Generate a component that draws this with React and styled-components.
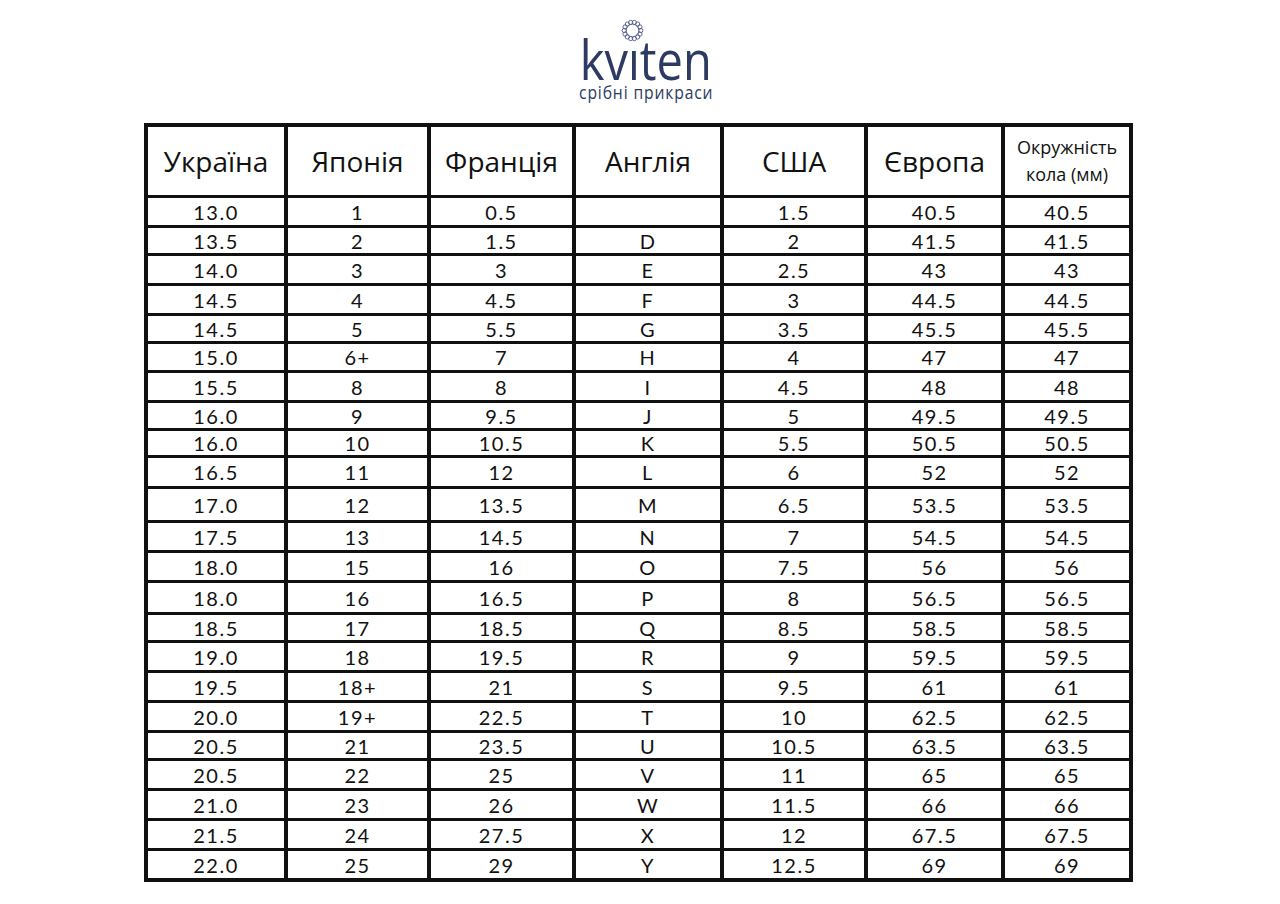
import React from 'react'
import styled, { createGlobalStyle } from 'styled-components'

const GlobalStyle = createGlobalStyle`
  body {
    margin: 0;
    background: #fff;
    font-family: 'Open Sans', 'Liberation Sans', sans-serif;
  }
`

const Page = styled.div`
  display: flex;
  flex-direction: column;
  align-items: center;
  padding-top: 34px;
  width: 1280px;
  height: 904px;
  box-sizing: border-box;
`

const Logo = styled.div`
  position: relative;
  display: flex;
  flex-direction: column;
  align-items: center;
  margin-left: 12px;
  color: #2d3a62;
`

const Ring = styled.svg`
  position: absolute;
  top: -15px;
  left: 50%;
  margin-left: -25px;
  width: 23px;
  height: 23px;
`

const Wordmark = styled.div`
  font-family: 'Open Sans', sans-serif;
  font-size: 54px;
  line-height: 50px;
  transform: scaleX(0.87);
`

const Tagline = styled.div`
  font-family: 'Open Sans', sans-serif;
  font-size: 18px;
  line-height: 16px;
  letter-spacing: 1px;
  transform: scaleX(0.87);
`

const Sheet = styled.div`
  display: grid;
  grid-template-columns: 136px 139px 141px 144px 140px 133px 124px;
  grid-template-rows: 68px ${p => p.$rows};
  column-gap: 4px;
  row-gap: 3px;
  padding: 4px;
  margin: 23px 3px 0 0;
  background: #111;
`

const Cell = styled.div`
  display: flex;
  align-items: center;
  justify-content: center;
  background: #fff;
  color: #111;
  font-family: Lato, 'Open Sans', sans-serif;
  font-size: 20px;
  letter-spacing: 1.5px;
  white-space: nowrap;
`

const HeadCell = styled(Cell)`
  font-family: 'Open Sans', sans-serif;
  font-size: ${p => (p.$small ? '18px' : '28px')};
  line-height: ${p => (p.$small ? '27px' : 'normal')};
  letter-spacing: 0;
  text-align: center;
  white-space: normal;
`

const heads = ['Україна', 'Японія', 'Франція', 'Англія', 'США', 'Європа']

const heights = [27, 25, 27, 27, 25, 26, 27, 25, 24, 28, 31, 27, 27, 29, 25, 27, 27, 27, 25, 27, 27, 27, 27]

const sizes = [
  ['13.0', '1', '0.5', '', '1.5', '40.5', '40.5'],
  ['13.5', '2', '1.5', 'D', '2', '41.5', '41.5'],
  ['14.0', '3', '3', 'E', '2.5', '43', '43'],
  ['14.5', '4', '4.5', 'F', '3', '44.5', '44.5'],
  ['14.5', '5', '5.5', 'G', '3.5', '45.5', '45.5'],
  ['15.0', '6+', '7', 'H', '4', '47', '47'],
  ['15.5', '8', '8', 'I', '4.5', '48', '48'],
  ['16.0', '9', '9.5', 'J', '5', '49.5', '49.5'],
  ['16.0', '10', '10.5', 'K', '5.5', '50.5', '50.5'],
  ['16.5', '11', '12', 'L', '6', '52', '52'],
  ['17.0', '12', '13.5', 'M', '6.5', '53.5', '53.5'],
  ['17.5', '13', '14.5', 'N', '7', '54.5', '54.5'],
  ['18.0', '15', '16', 'O', '7.5', '56', '56'],
  ['18.0', '16', '16.5', 'P', '8', '56.5', '56.5'],
  ['18.5', '17', '18.5', 'Q', '8.5', '58.5', '58.5'],
  ['19.0', '18', '19.5', 'R', '9', '59.5', '59.5'],
  ['19.5', '18+', '21', 'S', '9.5', '61', '61'],
  ['20.0', '19+', '22.5', 'T', '10', '62.5', '62.5'],
  ['20.5', '21', '23.5', 'U', '10.5', '63.5', '63.5'],
  ['20.5', '22', '25', 'V', '11', '65', '65'],
  ['21.0', '23', '26', 'W', '11.5', '66', '66'],
  ['21.5', '24', '27.5', 'X', '12', '67.5', '67.5'],
  ['22.0', '25', '29', 'Y', '12.5', '69', '69'],
]

function RingMark() {
  const dots = []
  for (let i = 0; i < 14; i++) {
    const a = (i / 14) * Math.PI * 2
    dots.push(
      <circle key={i} cx={11.5 + Math.cos(a) * 8.3} cy={11.5 + Math.sin(a) * 8.3} r="2.1" />
    )
  }
  return (
    <Ring viewBox="0 0 23 23" fill="none" stroke="#4f5a84" strokeWidth="0.9">
      {dots}
      <circle cx="11.5" cy="11.5" r="6.3" strokeWidth="0.7" />
    </Ring>
  )
}

export default function App() {
  return (
    <>
      <GlobalStyle />
      <Page>
        <Logo>
          <RingMark />
          <Wordmark>kvıten</Wordmark>
          <Tagline>срібні прикраси</Tagline>
        </Logo>
        <Sheet $rows={heights.map(h => h + 'px').join(' ')}>
          {heads.map(h => <HeadCell key={h}>{h}</HeadCell>)}
          <HeadCell $small>Окружність<br />кола (мм)</HeadCell>
          {sizes.map((row, r) =>
            row.map((v, c) => <Cell key={r + '-' + c}>{v}</Cell>)
          )}
        </Sheet>
      </Page>
    </>
  )
}
